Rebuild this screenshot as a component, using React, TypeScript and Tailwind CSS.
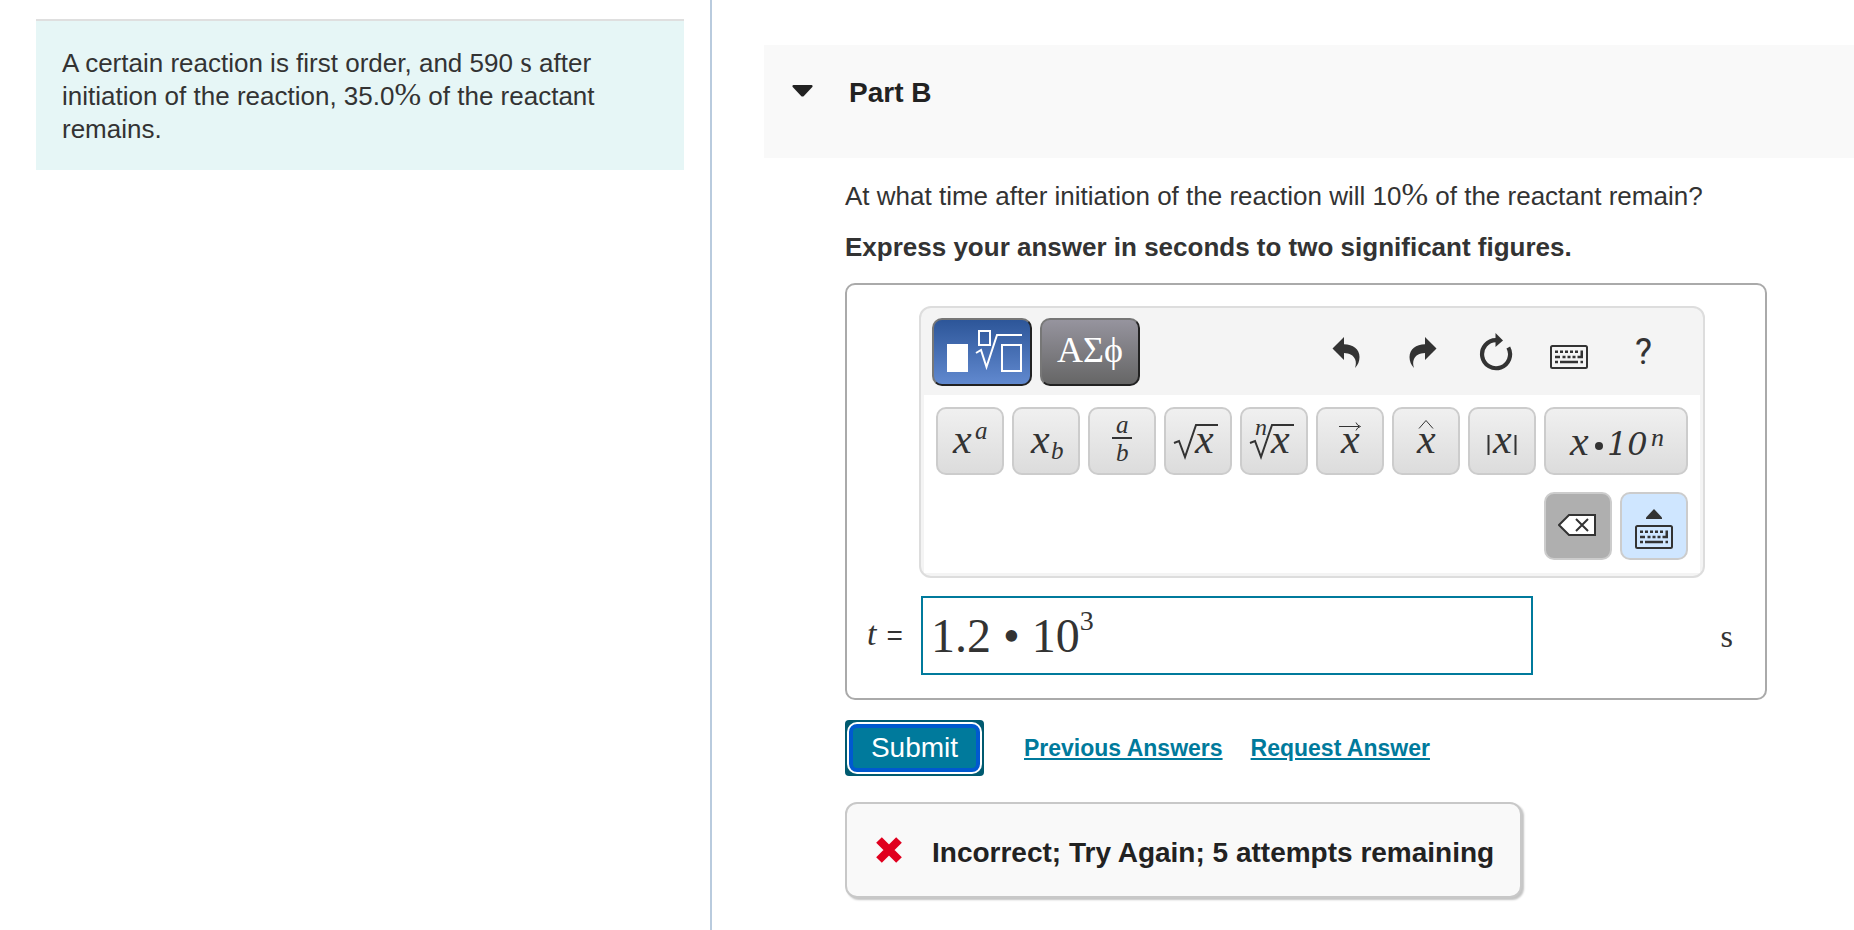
import type { ReactNode } from 'react';

function Percent() {
  return <span className="font-['Liberation_Serif',serif] text-[32px] leading-4">%</span>;
}

function KeyboardIcon() {
  return (
    <svg width="38" height="24" viewBox="0 0 38 24" fill="#333">
      <rect x="1" y="1" width="36" height="22" rx="1.500" fill="none" stroke="#333" strokeWidth="2" />
      <path d="M5 5.500h3V8H5zM10 5.500h3V8h-3zM15 5.500h3V8h-3zM20 5.500h3V8h-3zM25 5.500h3V8h-3zM5 10.700h5v2.500H5zM12.500 10.700h3v2.500h-3zM17.500 10.700h3v2.500h-3zM22.500 10.700h3v2.500h-3zM30.500 5.500H33v7.700h-5.500v-2.500h3zM5 15.800h3v2.500H5zM10 15.800h18v2.500H10zM30.500 15.800H33v2.500h-2.500z" />
    </svg>
  );
}

function UndoIcon({ flip = false }: { flip?: boolean }) {
  return (
    <svg width="28" height="32" viewBox="0 0 28 32" className={flip ? '-scale-x-100' : ''}>
      <path
        fill="#333"
        d="M0.500 12.500L12 1v7.200C21 8.500 27.500 13 27.500 21c0 4-1.500 8-4.500 11 1-3 1.200-6 .2-8.500C21.500 19 17.500 17.300 12 17v7z"
      />
    </svg>
  );
}

function ResetIcon() {
  return (
    <svg width="34" height="38" viewBox="0 0 34 38">
      <path d="M17 7.200a14 14 0 1 0 12.300 7.200" fill="none" stroke="#333" strokeWidth="4.200" />
      <path d="M16.500 0L24 7.500 16.500 14z" fill="#333" />
    </svg>
  );
}

interface KeyProps {
  label: string;
  wide?: boolean;
  children: ReactNode;
}

// Template key: the formula is drawn on a 64px tall canvas inside the border
function Key({ label, wide = false, children }: KeyProps) {
  const width = wide ? 140 : 64;

  return (
    <button
      type="button"
      aria-label={label}
      className="rounded-[10px] border-2 border-[#ccc] bg-linear-to-b from-[#f0f0f0] to-[#dcdcdc]"
    >
      <svg
        width={width}
        height="64"
        viewBox={`0 0 ${width} 64`}
        fill="#333"
        className="font-['Liberation_Serif',serif] text-[42px] italic"
      >
        {children}
      </svg>
    </button>
  );
}

function Stroke({ d, width = 2 }: { d: string; width?: number }) {
  return <path d={d} fill="none" stroke="#333" strokeWidth={width} />;
}

export default function App() {
  return (
    <div className="flex min-h-screen bg-white font-['Liberation_Sans',Arial,sans-serif] text-[26px] text-[#333]">
      <aside className="w-[712px] shrink-0 border-r-2 border-[#b9cbde] pt-[19px] pr-[26px] pl-9">
        <p className="border-t-2 border-[#dfdfdf] bg-[#e6f6f6] px-[26px] pt-[26px] pb-6 leading-[33px]">
          A certain reaction is first order, and 590{' '}
          <span className="font-['Liberation_Serif',serif] text-[30px] leading-4">s</span> after initiation of the
          reaction, 35.0
          <Percent /> of the reactant remains.
        </p>
      </aside>

      <main className="min-w-0 grow pt-[45px] pl-[52px]">
        <header className="flex h-[113px] items-start bg-[#f9f9f9] pt-[30px] pl-7">
          <button type="button" aria-label="Collapse Part B" className="flex h-8 w-[57px] items-center">
            <svg width="21" height="12" viewBox="0 0 21 12" fill="#222">
              <path d="M1.500 0h18c1 0 1.500 1.200.8 2l-8.400 9c-.8.800-2 .800-2.800 0L.7 2C0 1.200.5 0 1.500 0z" />
            </svg>
          </button>
          <h1 className="text-[28px] font-bold leading-9 text-[#222]">Part B</h1>
        </header>

        <div className="pr-[87px] pl-[81px]">
          <p className="mt-[22px] leading-[33px]">
            At what time after initiation of the reaction will 10
            <Percent /> of the reactant remain?
          </p>
          <p className="mt-[18px] font-bold leading-[33px]">
            Express your answer in seconds to two significant figures.
          </p>

          <section className="mt-[19px] rounded-[10px] border-2 border-[#aaa] pt-[21px] pb-[23px]">
            <div className="mr-[60px] ml-[72px] rounded-xl border-2 border-[#ddd] bg-[#f4f4f4] px-[3px] pb-[3px]">
              <div className="flex h-[87px] items-start px-2 pt-[10px]">
                <button
                  type="button"
                  aria-label="Templates"
                  className="flex h-[68px] w-[100px] items-center justify-center rounded-[10px] border-2 border-t-[#777] border-r-[#222] border-b-[#222] border-l-[#777] bg-linear-to-b from-[#2d5699] to-[#6189cf]"
                >
                  <svg width="96" height="64" viewBox="0 0 96 64" fill="none" stroke="#fff" strokeWidth="2">
                    <rect x="13" y="24" width="21" height="28" fill="#fff" stroke="none" />
                    <rect x="45" y="11" width="11" height="14" />
                    <path d="M42 33l5-3 5.500 17L63 15h25" />
                    <rect x="68" y="25" width="19" height="26" />
                  </svg>
                </button>
                <button
                  type="button"
                  aria-label="Symbols"
                  className="ml-2 h-[68px] w-[100px] rounded-[10px] border-2 border-t-[#777] border-r-[#222] border-b-[#222] border-l-[#777] bg-linear-to-b from-[#96949e] to-[#666] pb-1 font-['Liberation_Serif',serif] text-4xl leading-none text-white"
                >
                  ΑΣϕ
                </button>
                <div className="ml-auto flex h-[68px] items-center pr-10">
                  <button type="button" aria-label="Undo" className="mr-[49px]">
                    <UndoIcon />
                  </button>
                  <button type="button" aria-label="Redo" className="mr-[42px]">
                    <UndoIcon flip />
                  </button>
                  <button type="button" aria-label="Reset" className="mr-[37px]">
                    <ResetIcon />
                  </button>
                  <button type="button" aria-label="Keyboard shortcuts" className="mr-[47px] pt-[10px]">
                    <KeyboardIcon />
                  </button>
                  <button type="button" aria-label="Help" className="font-[Roboto,sans-serif] text-4xl leading-none">
                    ?
                  </button>
                </div>
              </div>

              <div className="flex flex-wrap justify-end gap-x-2 gap-y-[17px] bg-white px-3 pt-3 pb-[13px]">
                <Key label="Superscript">
                  <text x="15" y="44">x</text>
                  <text x="37" y="30" fontSize="25">a</text>
                </Key>
                <Key label="Subscript">
                  <text x="17" y="44">x</text>
                  <text x="37" y="50" fontSize="25">b</text>
                </Key>
                <Key label="Fraction">
                  <text x="26" y="24" fontSize="25">a</text>
                  <Stroke d="M22 29h20" />
                  <text x="26" y="52" fontSize="25">b</text>
                </Key>
                <Key label="Square root">
                  <Stroke d="M8 34l5-2 6 16L30 16h22" />
                  <text x="29" y="44">x</text>
                </Key>
                <Key label="Nth root">
                  <Stroke d="M8 34l5-2 6 16L30 16h22" />
                  <text x="13" y="26" fontSize="24">n</text>
                  <text x="29" y="44">x</text>
                </Key>
                <Key label="Vector">
                  <Stroke d="M21 17.500h20M38 13.500q1 3 4.500 4-3.500 1-4.500 4" width={1} />
                  <text x="23" y="44">x</text>
                </Key>
                <Key label="Unit vector">
                  <Stroke d="M25 19.500l7-8 7 8" width={1} />
                  <text x="23" y="44">x</text>
                </Key>
                <Key label="Absolute value">
                  <Stroke d="M18.500 26v20M45.500 26v20" width={2} />
                  <text x="23" y="44">x</text>
                </Key>
                <Key label="Scientific notation" wide>
                  <text x="24" y="46">x</text>
                  <circle cx="53" cy="37" r="4" />
                  <text x="61" y="46" fontSize="32" fontFamily="DejaVu Serif">10</text>
                  <text x="105" y="37" fontSize="26">n</text>
                </Key>
                <button
                  type="button"
                  aria-label="Delete"
                  className="flex size-[68px] items-center justify-center rounded-[10px] border-2 border-[#ccc] bg-[#afafaf] pb-[2px]"
                >
                  <svg width="40" height="24" viewBox="0 0 40 24" stroke="#333" strokeWidth="2">
                    <path d="M1 12L11 2h26v20H11z" fill="#fff" />
                    <path d="M18 6l12 12M30 6L18 18" />
                  </svg>
                </button>
                <button
                  type="button"
                  aria-label="Toggle keyboard"
                  className="flex size-[68px] flex-col items-center gap-[6px] rounded-[10px] border-2 border-[#ccc] bg-[#cfe6ff] pt-[15px]"
                >
                  <svg width="16" height="10" viewBox="0 0 16 10" fill="#333">
                    <path d="M0 8.500L8 0l8 8.500V10H0z" />
                  </svg>
                  <KeyboardIcon />
                </button>
              </div>
            </div>

            <div className="mt-[18px] flex items-center pr-8 pl-5">
              <label htmlFor="answer" className="flex w-[54px] items-baseline gap-[10px] text-[28px]">
                <i className="font-['Liberation_Serif',serif] text-[34px] leading-8">t</i> =
              </label>
              <div
                id="answer"
                role="textbox"
                aria-label="t"
                contentEditable
                suppressContentEditableWarning
                className="h-[79px] w-[612px] border-2 border-[#007a9c] px-2 font-['Liberation_Serif',serif] text-5xl leading-[75px]"
              >
                1.2 • 10<sup className="-top-[22px] text-[28px]">3</sup>
              </div>
              <span className="ml-auto font-['Liberation_Serif',serif] text-[32px] leading-8">s</span>
            </div>
          </section>

          <div className="mt-5 flex items-center">
            <button
              type="button"
              className="h-14 w-[139px] rounded-sm bg-[#005a70] p-1 text-[28px] text-white"
            >
              <span className="flex h-full items-center justify-center rounded-lg border-4 border-[#0059cf] bg-[#007a9c] shadow-[0_0_0_2px_#fff]">
                Submit
              </span>
            </button>
            <a href="#previous" className="ml-10 text-[23px] font-bold text-[#007a9c] underline">Previous Answers</a>
            <a href="#request" className="ml-7 text-[23px] font-bold text-[#007a9c] underline">Request Answer</a>
          </div>

          <div className="mt-[26px] flex h-[96px] w-fit items-center rounded-xl border-2 border-[#c8c8c8] bg-[#f9f9f9] pr-[26px] pl-7 shadow-[2px_2px_2px_#c4c4c4]">
            <svg width="28" height="28" viewBox="0 0 28 28" fill="none" stroke="#e0001f" strokeWidth="8" strokeLinejoin="round">
              <path d="M4 4l20 20M24 4L4 24" />
            </svg>
            <strong className="ml-[29px] pt-[6px] text-[28px] text-[#222]">
              Incorrect; Try Again; 5 attempts remaining
            </strong>
          </div>
        </div>
      </main>
    </div>
  );
}
